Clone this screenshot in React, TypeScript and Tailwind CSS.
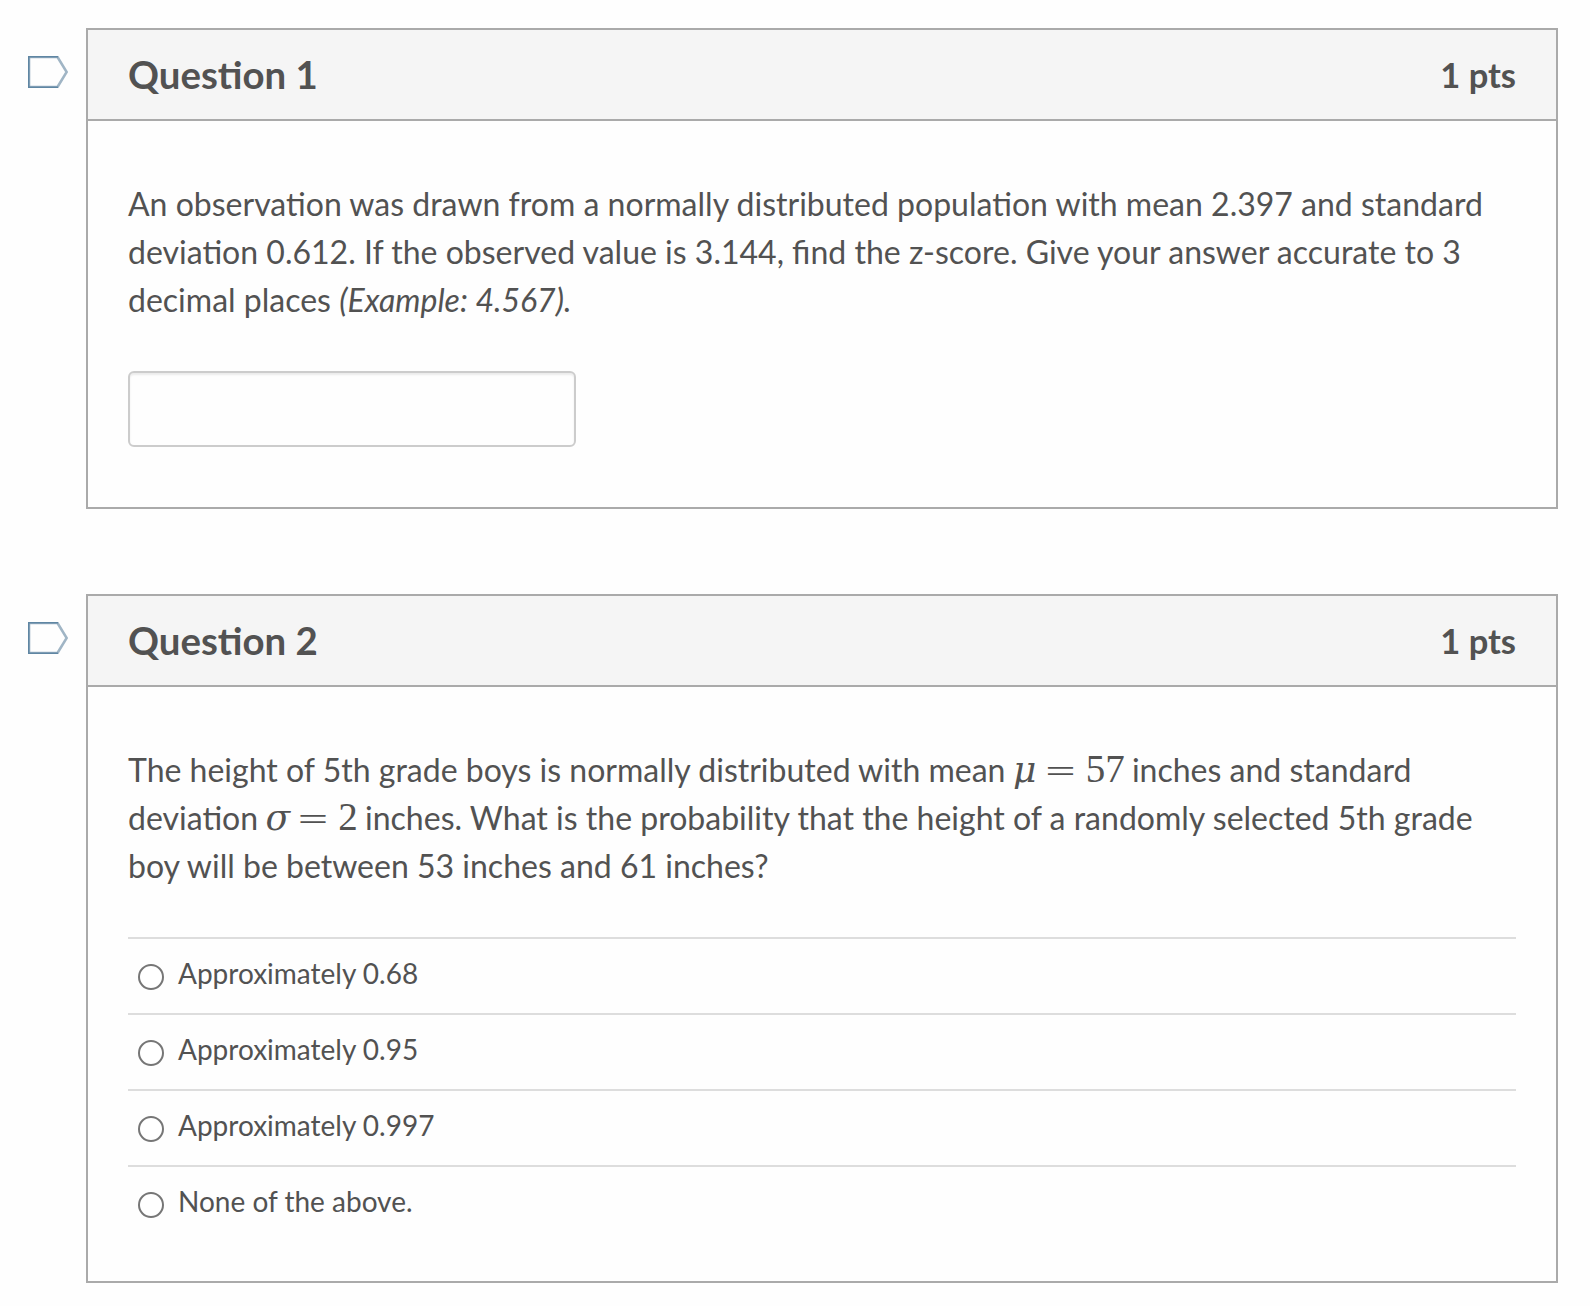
import React, { useState } from 'react';

interface QuestionProps {
  number: number;
  points: number;
  children: React.ReactNode;
}

const ANSWERS = ['Approximately 0.68', 'Approximately 0.95', 'Approximately 0.997', 'None of the above.'];

function FlagIcon() {
  return (
    <svg className="block h-8 w-10" viewBox="0 0 40 32" fill="none">
      <path d="M1 1H29.5L38.7 16L29.5 31H1Z" stroke="#a0b5c5" strokeWidth="2.6" />
      <path d="M30 .75H.75V31.25H30" stroke="#5f86a3" strokeWidth="1.5" />
    </svg>
  );
}

function Equation({ symbol, value }: { symbol: string; value: string }) {
  return (
    <span className="inline-flex items-baseline align-baseline font-['Liberation_Serif',serif] text-[39px] leading-[0px]">
      <span className="-ml-0.5 w-[32px] font-['DejaVu_Math_TeX_Gyre','Liberation_Serif',serif] text-[36px]">{symbol}</span>
      <span className="w-[42px] translate-y-[2px] font-['DejaVu_Sans',sans-serif] text-[40px] font-extralight">=</span>
      <span className="-mr-px">{value}</span>
    </span>
  );
}

function Question({ number, points, children }: QuestionProps) {
  return (
    <section className="flex items-start">
      <button className="mt-7 mr-[18px] shrink-0" aria-label={`Flag question ${number}`}>
        <FlagIcon />
      </button>
      <div className="w-[1472px] border-2 border-[#aaaaaa] bg-[#fefefe]">
        <div className="flex h-[91px] items-center justify-between border-b-2 border-[#aaaaaa] bg-[#f5f5f5] px-10">
          <h2 className="text-[38.4px] font-bold">Question {number}</h2>
          <span className="text-[34.5px] font-bold">{points} pts</span>
        </div>
        <div className="px-10 pt-[58px]">{children}</div>
      </div>
    </section>
  );
}

export default function App() {
  const [score, setScore] = useState('');
  const [selected, setSelected] = useState<string | null>(null);

  return (
    <main className="flex min-h-[1306px] w-[1590px] flex-col gap-[85px] bg-[#fefefe] pt-7 pl-7 font-['Lato',sans-serif] text-[#525252]">
      <Question number={1} points={1}>
        <p className="pt-px text-[32.02px] leading-[48px]">
          An observation was drawn from a normally distributed population with mean 2.397 and standard
          <br />
          deviation 0.612. If the observed value is 3.144, find the z-score. Give your answer accurate to 3
          <br />
          decimal places <em>(Example: 4.567).</em>
        </p>
        <input
          type="text"
          value={score}
          onChange={(e) => setScore(e.target.value)}
          className="mt-[47px] mb-[60px] block h-[76px] w-[448px] rounded-md border-2 border-[#cccccc] px-4 text-[32px] shadow-[inset_0_2px_2px_rgba(0,0,0,0.075)] outline-none"
        />
      </Question>

      <Question number={2} points={1}>
        <p className="pt-px text-[32.02px] leading-[48px]">
          The height of 5th grade boys is normally distributed with mean <Equation symbol="𝜇" value="57" /> inches and standard
          <br />
          deviation <Equation symbol="𝜎" value="2" /> inches. What is the probability that the height of a randomly selected 5th grade
          <br />
          boy will be between 53 inches and 61 inches?
        </p>
        <div className="mt-[47px] mb-[40px]">
          {ANSWERS.map((answer) => (
            <label key={answer} className="flex h-[76px] border-t-2 border-[#dddddd] pl-[10px]">
              <input
                type="radio"
                name="probability"
                checked={selected === answer}
                onChange={() => setSelected(answer)}
                className="mt-[25px] mr-[14px] h-[26px] w-[26px] appearance-none rounded-full border-2 border-[#767676] bg-white checked:border-8"
              />
              <span className="mt-[17px] text-[28px] leading-[34px]">{answer}</span>
            </label>
          ))}
        </div>
      </Question>
    </main>
  );
}
